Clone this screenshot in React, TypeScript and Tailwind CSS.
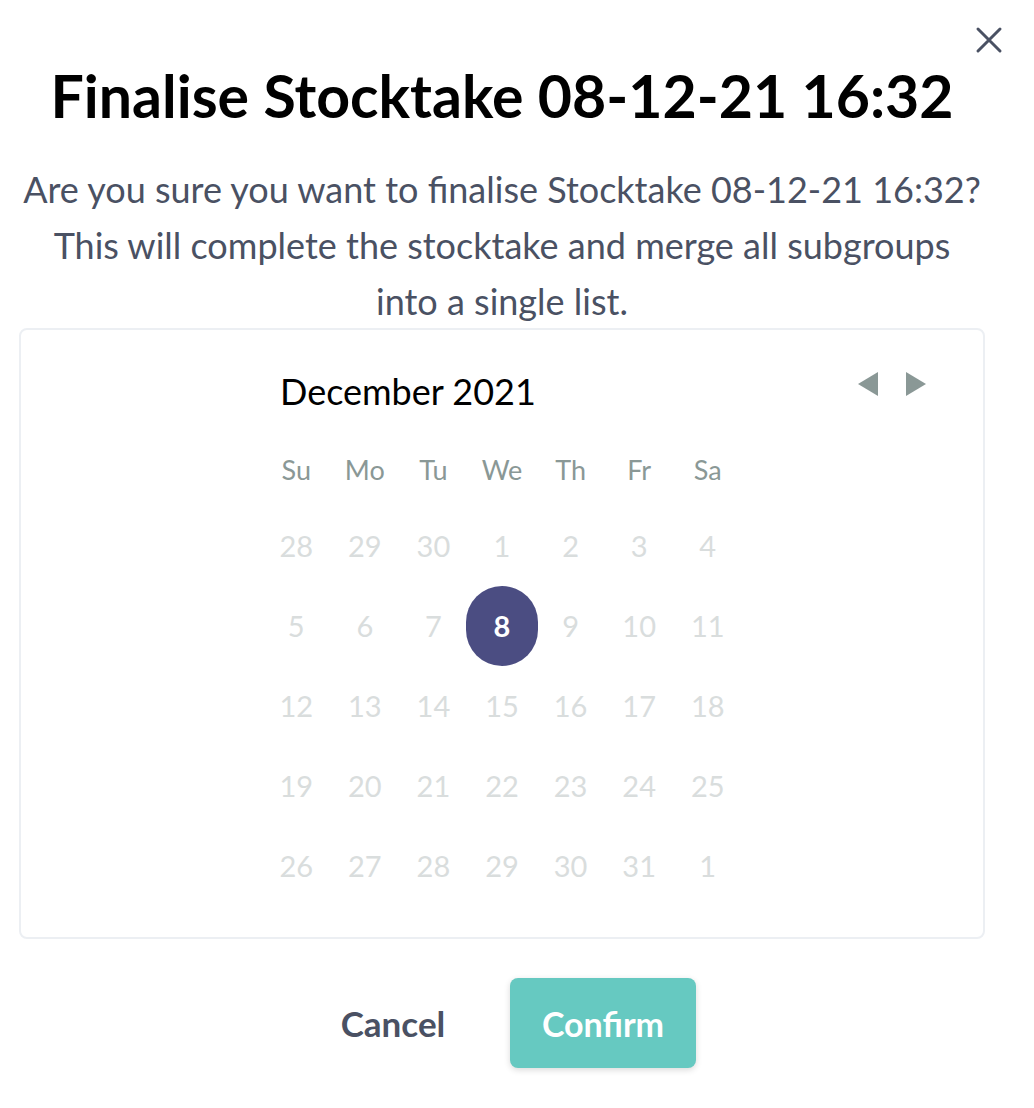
import React from "react";

const rows = [
  ["28", "29", "30", "1", "2", "3", "4"],
  ["5", "6", "7", "8", "9", "10", "11"],
  ["12", "13", "14", "15", "16", "17", "18"],
  ["19", "20", "21", "22", "23", "24", "25"],
  ["26", "27", "28", "29", "30", "31", "1"],
];
const heads = ["Su", "Mo", "Tu", "We", "Th", "Fr", "Sa"];

export default function App() {
  return (
    <div
      className="relative w-[1034px] h-[1108px] bg-white overflow-hidden"
      style={{ fontFamily: "Lato, 'Noto Sans', sans-serif" }}
    >
      <button className="absolute left-[975px] top-[26px] w-[28px] h-[28px] flex items-center justify-center">
        <svg width="28" height="28" viewBox="0 0 28 28" fill="none">
          <path d="M3 3L25 25M25 3L3 25" stroke="#4a5163" strokeWidth="3" strokeLinecap="round" />
        </svg>
      </button>
      <div className="pl-[19px] pr-[49px] flex flex-col items-center">
        <h1 className="mt-[60px] text-[59px] leading-[72px] font-bold text-black whitespace-nowrap">
          Finalise Stocktake 08-12-21 16:32
        </h1>
        <p className="mt-[29px] text-[36px] leading-[56px] text-[#4a5163] text-center whitespace-nowrap">
          Are you sure you want to finalise Stocktake 08-12-21 16:32?
          <br />
          This will complete the stocktake and merge all subgroups
          <br />
          into a single list.
        </p>
        <div className="-mt-px w-full border-2 border-[#eceff3] rounded-[8px] pt-[40px] pb-[31px] flex justify-center relative">
          <div className="absolute left-[837px] top-[42px] flex gap-[28px]">
            <svg width="20" height="24" viewBox="0 0 20 24">
              <path d="M0 12L20 0V24Z" fill="#8a9896" />
            </svg>
            <svg width="20" height="24" viewBox="0 0 20 24">
              <path d="M20 12L0 0V24Z" fill="#8a9896" />
            </svg>
          </div>
          <div className="w-[480px]">
            <div className="pl-[18px] text-[36px] leading-[42px] text-black">December 2021</div>
            <div className="mt-[22px] grid grid-cols-7">
              {heads.map((h) => (
                <div key={h} className="h-[72px] flex items-center justify-center text-[27px] text-[#8a9896]">
                  {h}
                </div>
              ))}
            </div>
            {rows.map((r, i) => (
              <div key={i} className="grid grid-cols-7">
                {r.map((d, j) => {
                  const sel = i === 1 && j === 3;
                  return (
                    <div key={j} className="h-[80px] flex items-center justify-center">
                      {sel ? (
                        <div className="shrink-0 min-w-[72px] w-[72px] h-[80px] rounded-full bg-[#4b4d82] flex items-center justify-center text-white text-[29px] font-bold">
                          {d}
                        </div>
                      ) : (
                        <span className="text-[29px] text-[#d9dddd]">{d}</span>
                      )}
                    </div>
                  );
                })}
              </div>
            ))}
          </div>
        </div>
        <div className="mt-[39px] flex gap-[24px] ml-[-8px]">
          <button className="w-[186px] h-[90px] text-[35px] font-bold text-[#4a5163]">Cancel</button>
          <button className="w-[186px] h-[90px] rounded-[8px] bg-[#66c9c1] text-white text-[34px] font-bold shadow-[0_2px_6px_rgba(0,0,0,0.15)]">
            Confirm
          </button>
        </div>
      </div>
    </div>
  );
}
